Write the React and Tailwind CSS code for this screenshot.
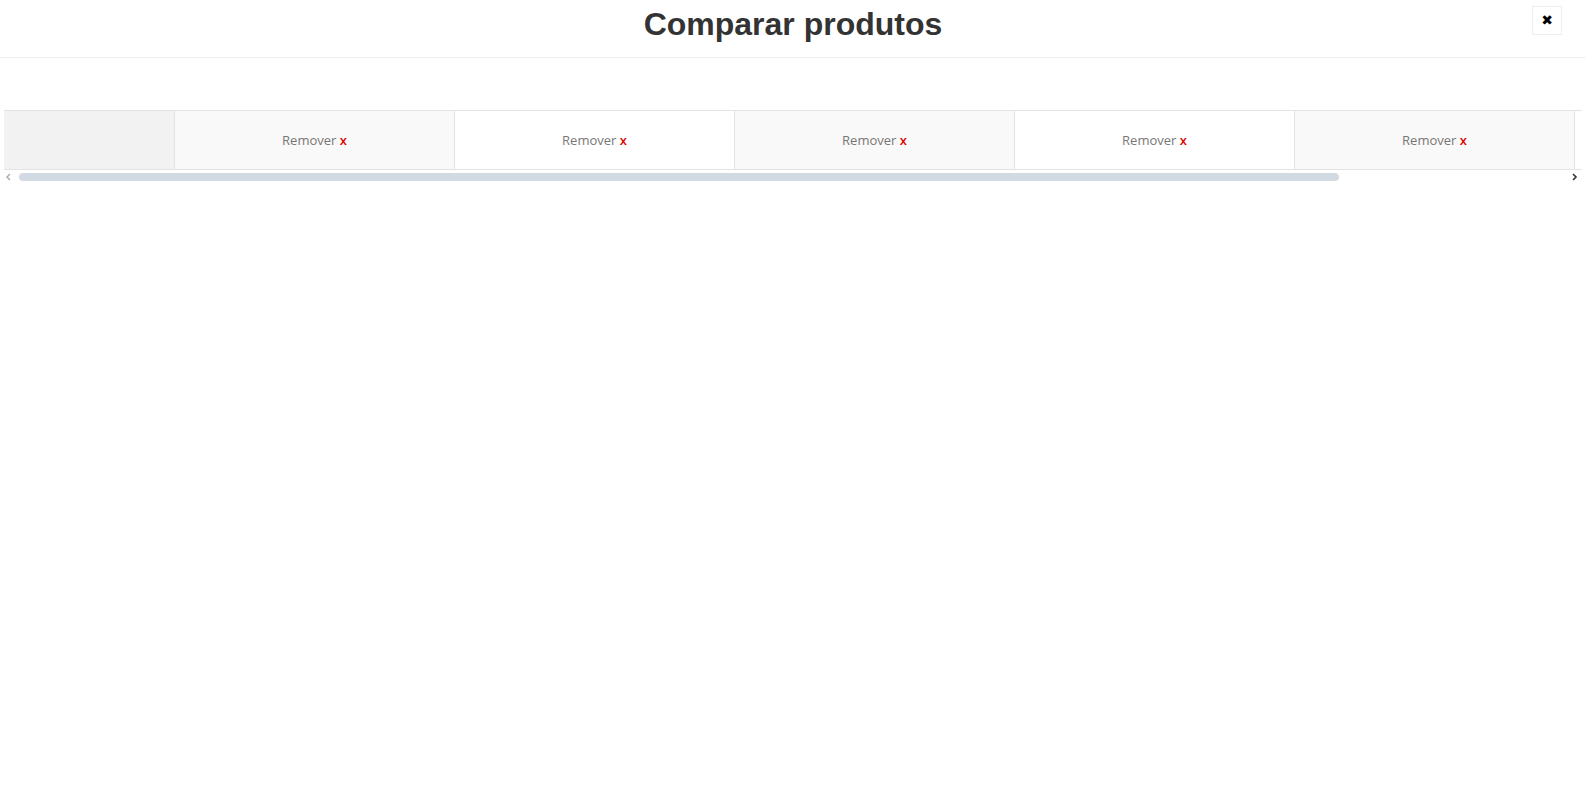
import React from 'react';

const products = [1, 2, 3, 4, 5];

export default function App() {
  return (
    <div className="min-h-screen bg-white" style={{ fontFamily: '"Open Sans", sans-serif' }}>
      {/* Header */}
      <div className="relative flex h-[58px] items-start justify-center border-b border-[#efefef]">
        <h1 className="mt-[4px] text-[32px] font-bold leading-[40px] text-[#333]" style={{ fontFamily: '"Liberation Sans", Arial, sans-serif' }}>
          Comparar produtos
        </h1>
        <button className="absolute right-[24px] top-[6px] flex h-[29px] w-[30px] items-center justify-center border border-[#eee] bg-white text-[14px] font-bold text-black" style={{ fontFamily: '"DejaVu Sans", sans-serif' }}>
          ✖
        </button>
      </div>

      {/* Comparison table */}
      <div className="ml-[4px] mr-[4px] mt-[52px]">
        <div className="overflow-hidden border-t border-b border-[#e3e3e3]">
          <div className="flex w-max">
            <div className="h-[58px] w-[171px] shrink-0 border-r border-[#e3e3e3] bg-[#f2f2f2]" />
            {products.map((p, i) => (
              <div
                key={p}
                className={`flex h-[58px] w-[280px] shrink-0 items-center justify-center border-r border-[#e3e3e3] pt-[2px] text-[13px] text-[#777] ${i % 2 === 0 ? 'bg-[#f9f9f9]' : 'bg-white'}`}
              >
                Remover&nbsp;<span className="font-semibold text-[#e00000]">x</span>
              </div>
            ))}
            <div className="h-[58px] w-[280px] shrink-0 border-r border-[#e3e3e3] bg-white" />
          </div>
        </div>

        {/* Scrollbar */}
        <div className="flex h-[14px] items-center pr-[3px]">
          <svg width="10" height="10" viewBox="0 0 10 10" className="shrink-0">
            <path d="M6 2 L3 5 L6 8" fill="none" stroke="#aaa" strokeWidth="1.4" />
          </svg>
          <div className="ml-[5px] flex-1">
            <div className="h-[8px] w-[1320px] rounded-full bg-[#d1dae2]" />
          </div>
          <svg width="10" height="10" viewBox="0 0 10 10" className="shrink-0">
            <path d="M4 2 L7 5 L4 8" fill="none" stroke="#333" strokeWidth="1.6" />
          </svg>
        </div>
      </div>
    </div>
  );
}
